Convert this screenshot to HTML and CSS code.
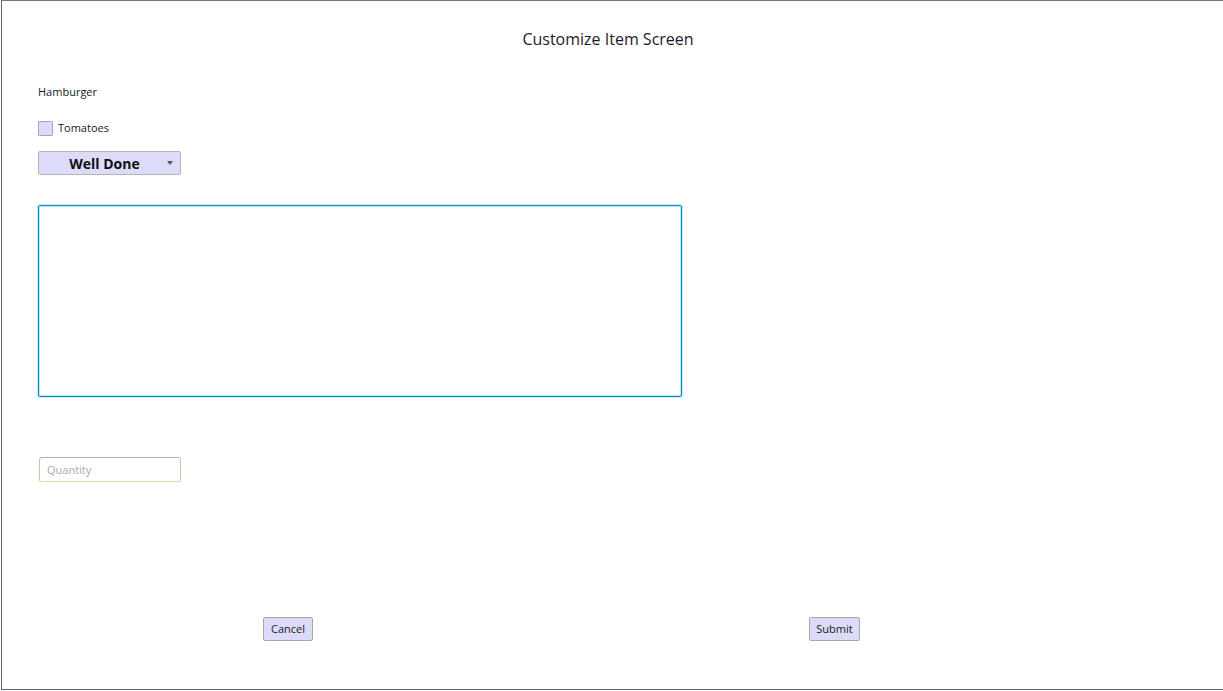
FILE: index.html
```html
<!DOCTYPE html>
<html>
<head>
<meta charset="utf-8">
<link rel="stylesheet" href="styles.css">
</head>
<body>
<div class="frame">
  <h1 class="title">Customize Item Screen</h1>
  <div class="content">
    <div class="item-name">Hamburger</div>
    <label class="check-row"><span class="checkbox"></span><span class="check-label">Tomatoes</span></label>
    <div class="dropdown"><span class="dd-text">Well Done</span><span class="dd-arrow"></span></div>
    <div class="notes"></div>
    <div class="quantity"><span class="placeholder">Quantity</span></div>
  </div>
  <div class="actions">
    <div class="slot slot-left"><button class="btn">Cancel</button></div>
    <div class="slot slot-right"><button class="btn">Submit</button></div>
  </div>
</div>
</body>
</html>
```
FILE: styles.css
```css
html, body {
  margin: 0;
  padding: 0;
  background: #ffffff;
}
body {
  width: 1223px;
  height: 691px;
  overflow: hidden;
  font-family: "Open Sans", "Noto Sans", sans-serif;
  color: #1a1a1a;
}
.frame {
  box-sizing: border-box;
  margin-left: 1px;
  width: 1222px;
  height: 690px;
  border-top: 1px solid #6b7a8a;
  border-left: 1px solid #5c6b7c;
  border-bottom: 1px solid #5c6b7c;
  display: flex;
  flex-direction: column;
}
.title {
  margin: 26px 0 0 0;
  height: 24px;
  font-size: 16px;
  font-weight: 400;
  text-align: center;
  line-height: 24px;
  color: #1c1c2e;
  width: 1212px;
}
.content {
  padding-left: 36px;
  display: flex;
  flex-direction: column;
  align-items: flex-start;
}
.item-name {
  margin-top: 33px;
  font-size: 11px;
  line-height: 16px;
  height: 16px;
}
.check-row {
  margin-top: 20px;
  display: flex;
  align-items: center;
  height: 16px;
}
.checkbox {
  box-sizing: border-box;
  width: 15px;
  height: 15px;
  border: 1px solid #a8a8b0;
  background: #dcdcfa;
  border-radius: 1px;
}
.check-label {
  margin-left: 5px;
  font-size: 11px;
  line-height: 16px;
}
.dropdown {
  box-sizing: border-box;
  margin-top: 15px;
  width: 143px;
  height: 24px;
  border: 1px solid #b6b6b0;
  border-radius: 2px;
  background: #dcdcfa;
  display: flex;
  align-items: center;
}
.dd-text {
  width: 131px;
  text-align: center;
  font-size: 14px;
  font-weight: 700;
  color: #111;
}
.dd-arrow {
  width: 0;
  height: 0;
  border-left: 3.5px solid transparent;
  border-right: 3.5px solid transparent;
  border-top: 4px solid #555;
  margin-left: -3px;
}
.notes {
  box-sizing: border-box;
  margin-top: 30px;
  width: 644px;
  height: 192px;
  border: 1px solid #0a8fc4;
  box-shadow: 0 0 0 1px #bfe6f7 inset, 0 0 0 1px #c6ebfa;
  border-radius: 2px;
}
.quantity {
  box-sizing: border-box;
  margin-top: 60px;
  margin-left: 1px;
  width: 142px;
  height: 25px;
  border: 1px solid #c9c8a6;
  border-top-color: #b4b4a8;
  border-bottom-color: #e0dda0;
  border-radius: 3px;
  display: flex;
  align-items: center;
  padding-left: 7px;
}
.placeholder {
  font-size: 11px;
  color: #a8a8b8;
}
.actions {
  margin-top: 135px;
  display: flex;
  height: 24px;
}
.slot-left {
  width: 311px;
  display: flex;
  justify-content: flex-end;
}
.slot-right {
  width: 547px;
  display: flex;
  justify-content: flex-end;
}
.btn {
  box-sizing: border-box;
  height: 24px;
  padding: 0 4px;
  border: 1px solid #a9a9a0;
  border-radius: 2px;
  background: #dcdcfa;
  font-family: "Open Sans", "Noto Sans", sans-serif;
  font-size: 11px;
  color: #1a1a1a;
  line-height: 20px;
}
.slot-left .btn { width: 50px; }
.slot-right .btn { width: 51px; }
```
